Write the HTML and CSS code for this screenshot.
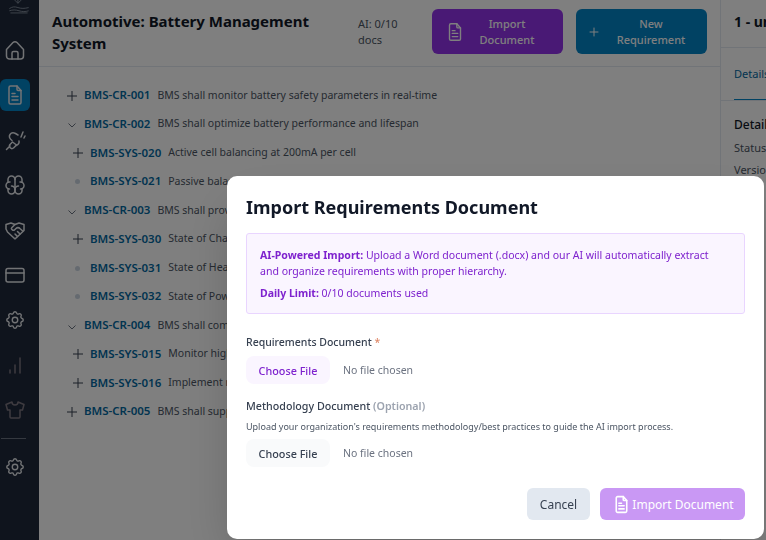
FILE: index.html
```html
<!DOCTYPE html>
<html lang="en">
<head>
<meta charset="utf-8">
<title>Automotive: Battery Management System</title>
<link rel="stylesheet" href="styles.css">
</head>
<body>
<div class="app">
  <aside class="sidebar">
    <svg class="logo" viewBox="0 0 20 14" fill="none" stroke="#8a94a3" stroke-width=".8"><path d="M9 0v4M6 1l3 3 3-3M1 9c3-2 5-2 8-1s6 1 10 0M1 11c3-1 6-1 9 0s6 1 9 0M2 13h16"/></svg>
    <nav class="nav">
      <a class="nav-item"><svg class="ico" viewBox="0 0 24 24"><path d="M3.500 11.500 10 4.600a2.800 2.800 0 0 1 4 0l6.500 6.900V18a3 3 0 0 1-3 3h-11a3 3 0 0 1-3-3z"/><path d="M9 21v-6a1.500 1.500 0 0 1 1.500-1.500h3A1.500 1.500 0 0 1 15 15v6"/></svg></a>
      <a class="nav-item active"><svg class="ico" viewBox="0 0 24 24"><path d="M7.500 3H14l4 4.500v12a1.500 1.500 0 0 1-1.500 1.500h-9A1.500 1.500 0 0 1 6 19.500v-15A1.500 1.500 0 0 1 7.500 3z"/><path d="M14 3v3.500a1 1 0 0 0 1 1h3"/><path d="M9 10.500h3M9 13.500h6M9 17h6"/></svg></a>
      <a class="nav-item"><svg class="ico" viewBox="0 0 24 24"><path d="M3.500 21.500 7 18M9.500 14 7 16.500a2.500 2.500 0 0 0 3.500 3.500l3-3z"/><path d="M9 12.500C6.500 10.500 6 8 7 6.500c1.200-1.700 3.500-2 5.500-1l2.500 1.500"/><path d="M13 17.500c2.500-1 3.500-2.500 3-4.500M18 9l2-5M21 10l1-2"/></svg></a>
      <a class="nav-item"><svg class="ico" viewBox="0 0 24 24"><path d="M15.500 13a3.500 3.500 0 0 0-3.500 3.500v1a3.500 3.500 0 0 0 7 0v-1.800"/><path d="M8.500 13a3.500 3.500 0 0 1 3.500 3.500v1a3.500 3.500 0 0 1-7 0v-1.800"/><path d="M17.500 16a3.500 3.500 0 0 0 0-7H17"/><path d="M19 9.300V6.500a3.500 3.500 0 0 0-7 0"/><path d="M6.500 16a3.500 3.500 0 0 1 0-7H7"/><path d="M5 9.300V6.500a3.500 3.500 0 0 1 7 0v10"/></svg></a>
      <a class="nav-item"><svg class="ico" viewBox="0 0 24 24"><path d="M3 6.500 8 5l4 1.500L16 5l5 1.500v6L12.500 20.500a1 1 0 0 1-1 0L4.500 14 3 11z"/><path d="M12 6.500 8.700 9.800a1 1 0 0 0 0 1.400l.5.500c.7.700 1.800.700 2.500 0l1-1a3.200 3.200 0 0 1 4.500 0l2.500 2.300"/><path d="m12 16 2.500 2.500M14.500 13.500l2.500 2.500"/></svg></a>
      <a class="nav-item"><svg class="ico" viewBox="0 0 24 24"><rect x="3" y="5.500" width="18" height="13.500" rx="2"/><path d="M3 10h18"/></svg></a>
      <a class="nav-item"><svg class="ico cog" viewBox="0 0 24 24"><path d="M10.325 4.317c.426-1.756 2.924-1.756 3.350 0a1.724 1.724 0 0 0 2.573 1.066c1.543-.94 3.310.826 2.370 2.370a1.724 1.724 0 0 0 1.065 2.572c1.756.426 1.756 2.924 0 3.350a1.724 1.724 0 0 0-1.066 2.573c.94 1.543-.826 3.310-2.370 2.370a1.724 1.724 0 0 0-2.572 1.065c-.426 1.756-2.924 1.756-3.350 0a1.724 1.724 0 0 0-2.573-1.066c-1.543.94-3.310-.826-2.370-2.370a1.724 1.724 0 0 0-1.065-2.572c-1.756-.426-1.756-2.924 0-3.350a1.724 1.724 0 0 0 1.066-2.573c-.94-1.543.826-3.310 2.370-2.370 1 .608 2.296.07 2.572-1.065z"/><circle cx="12" cy="12" r="3"/></svg></a>
      <a class="nav-item dim"><svg class="ico" viewBox="0 0 24 24"><path d="M7 20v-3M12 20v-8M17 20V5"/></svg></a>
      <a class="nav-item dim"><svg class="ico" viewBox="0 0 24 24"><path d="M15 4l6 2.500-1.500 5.500H17v7a1 1 0 0 1-1 1H8a1 1 0 0 1-1-1v-7H4.500L3 6.500 9 4a3 3 0 0 0 6 0z"/></svg></a>
      <hr class="nav-rule">
      <a class="nav-item"><svg class="ico cog" viewBox="0 0 24 24"><path d="M10.325 4.317c.426-1.756 2.924-1.756 3.350 0a1.724 1.724 0 0 0 2.573 1.066c1.543-.94 3.310.826 2.370 2.370a1.724 1.724 0 0 0 1.065 2.572c1.756.426 1.756 2.924 0 3.350a1.724 1.724 0 0 0-1.066 2.573c.94 1.543-.826 3.310-2.370 2.370a1.724 1.724 0 0 0-2.572 1.065c-.426 1.756-2.924 1.756-3.350 0a1.724 1.724 0 0 0-2.573-1.066c-1.543.94-3.310-.826-2.370-2.370a1.724 1.724 0 0 0-1.065-2.572c-1.756-.426-1.756-2.924 0-3.350a1.724 1.724 0 0 0 1.066-2.573c-.94-1.543.826-3.310 2.370-2.370 1 .608 2.296.07 2.572-1.065z"/><circle cx="12" cy="12" r="3"/></svg></a>
    </nav>
  </aside>

  <main class="main">
    <header class="header">
      <h1 class="title">Automotive: Battery Management System</h1>
      <div class="usage">AI: 0/10 docs</div>
      <button class="action purple">
        <svg class="action-ico" viewBox="0 0 24 24"><path d="M7.500 3H14l4 4.500v12a1.500 1.500 0 0 1-1.500 1.500h-9A1.500 1.500 0 0 1 6 19.500v-15A1.500 1.500 0 0 1 7.500 3z"/><path d="M14 3v3.500a1 1 0 0 0 1 1h3"/><path d="M9 10.500h3M9 13.500h6M9 17h6"/></svg>
        <span class="action-text">Import Document</span>
      </button>
      <button class="action blue">
        <svg class="action-ico" viewBox="0 0 24 24"><path d="M12 6v12M6 12h12"/></svg>
        <span class="action-text">New Requirement</span>
      </button>
    </header>
    <ul class="tree">
      <li class="row"><span class="tog"><svg class="plus" viewBox="0 0 10 10"><path d="M5 0v10M0 5h10"/></svg></span><b class="rid">BMS-CR-001</b><span class="desc">BMS shall monitor battery safety parameters in real-time</span></li>
      <li class="row"><span class="tog"><svg class="chev" viewBox="0 0 10 10"><path d="m1.500 3.500 3.500 3.500 3.500-3.500"/></svg></span><b class="rid">BMS-CR-002</b><span class="desc">BMS shall optimize battery performance and lifespan</span></li>
      <li class="row child"><span class="tog"><svg class="plus" viewBox="0 0 10 10"><path d="M5 0v10M0 5h10"/></svg></span><b class="rid">BMS-SYS-020</b><span class="desc">Active cell balancing at 200mA per cell</span></li>
      <li class="row child"><span class="tog"><i class="dot"></i></span><b class="rid">BMS-SYS-021</b><span class="desc">Passive balancing during charge</span></li>
      <li class="row"><span class="tog"><svg class="chev" viewBox="0 0 10 10"><path d="m1.500 3.500 3.500 3.500 3.500-3.500"/></svg></span><b class="rid">BMS-CR-003</b><span class="desc">BMS shall provide state estimation</span></li>
      <li class="row child"><span class="tog"><svg class="plus" viewBox="0 0 10 10"><path d="M5 0v10M0 5h10"/></svg></span><b class="rid">BMS-SYS-030</b><span class="desc">State of Charge estimation</span></li>
      <li class="row child"><span class="tog"><i class="dot"></i></span><b class="rid">BMS-SYS-031</b><span class="desc">State of Health estimation</span></li>
      <li class="row child"><span class="tog"><i class="dot"></i></span><b class="rid">BMS-SYS-032</b><span class="desc">State of Power estimation</span></li>
      <li class="row"><span class="tog"><svg class="chev" viewBox="0 0 10 10"><path d="m1.500 3.500 3.500 3.500 3.500-3.500"/></svg></span><b class="rid">BMS-CR-004</b><span class="desc">BMS shall comply with safety standards</span></li>
      <li class="row child"><span class="tog"><svg class="plus" viewBox="0 0 10 10"><path d="M5 0v10M0 5h10"/></svg></span><b class="rid">BMS-SYS-015</b><span class="desc">Monitor high voltage isolation</span></li>
      <li class="row child"><span class="tog"><svg class="plus" viewBox="0 0 10 10"><path d="M5 0v10M0 5h10"/></svg></span><b class="rid">BMS-SYS-016</b><span class="desc">Implement redundant monitoring</span></li>
      <li class="row"><span class="tog"><svg class="plus" viewBox="0 0 10 10"><path d="M5 0v10M0 5h10"/></svg></span><b class="rid">BMS-CR-005</b><span class="desc">BMS shall support diagnostics</span></li>
    </ul>
  </main>

  <aside class="panel">
    <div class="panel-head">1 - untitled</div>
    <div class="tabs"><span class="tab">Details</span></div>
    <div class="panel-body">
      <h3 class="panel-title">Details</h3>
      <p class="panel-line">Status: Draft</p>
      <p class="panel-line">Version: 1</p>
    </div>
  </aside>
</div>

<div class="overlay">
  <section class="modal">
    <h2 class="modal-title">Import Requirements Document</h2>
    <div class="info">
      <p class="info-text"><strong>AI-Powered Import:</strong> Upload a Word document (.docx) and our AI will automatically extract and organize requirements with proper hierarchy.</p>
      <p class="info-limit"><strong>Daily Limit:</strong> 0/10 documents used</p>
    </div>
    <label class="label">Requirements Document <span class="req">*</span></label>
    <div class="file"><span class="file-btn primary">Choose File</span><span class="file-none">No file chosen</span></div>
    <label class="label second">Methodology Document <span class="opt">(Optional)</span></label>
    <p class="help">Upload your organization's requirements methodology/best practices to guide the AI import process.</p>
    <div class="file"><span class="file-btn">Choose File</span><span class="file-none">No file chosen</span></div>
    <div class="footer">
      <button class="cancel">Cancel</button>
      <button class="submit"><svg class="submit-ico" viewBox="0 0 24 24"><path d="M7.500 3H14l4 4.500v12a1.500 1.500 0 0 1-1.500 1.500h-9A1.500 1.500 0 0 1 6 19.500v-15A1.500 1.500 0 0 1 7.500 3z"/><path d="M14 3v3.500a1 1 0 0 0 1 1h3"/><path d="M9 10.500h3M9 13.500h6M9 17h6"/></svg>Import Document</button>
    </div>
  </section>
</div>
</body>
</html>
```
FILE: styles.css
```css
* { box-sizing: border-box; }
html, body { margin: 0; height: 100%; overflow: hidden; }
body { font-family: "Noto Sans", sans-serif; color: #111827; background: #fff; }
button { font-family: inherit; border: 0; cursor: pointer; }
p, h1, h2, h3, ul { margin: 0; padding: 0; }

.app { display: flex; height: 540px; width: 766px; overflow: hidden; }

.sidebar { width: 39px; flex: none; background: #1e293b; position: relative; padding-top: 34px; overflow: hidden; }
.logo { position: absolute; left: 8px; top: -1px; width: 22px; height: 15px; }
.nav { display: flex; flex-direction: column; gap: 13px; width: 30px; }
.nav-item { display: flex; align-items: center; justify-content: center; height: 32px; width: 30px; color: #e5e7eb; border-radius: 6px; }
.nav-item.active { background: #0284c7; }
.nav-item.dim { color: #7d7680; }
.ico { width: 24px; height: 24px; flex: none; fill: none; stroke: currentColor; stroke-width: 1.500; stroke-linecap: round; stroke-linejoin: round; }
.ico.cog { width: 22px; height: 22px; }
.nav-rule { width: 25px; margin: -1px 0 -1px 1px; border: 0; border-top: 1px solid #6b7280; }

.main { flex: 1; min-width: 0; display: flex; flex-direction: column; background: #fff; }
.header { height: 67px; flex: none; display: flex; align-items: center; padding: 0 13px 3px; border-bottom: 1px solid #e2e8f0; }
.title { font-size: 15px; line-height: 22px; font-weight: 700; width: 306px; flex: none; color: #111827; }
.usage { width: 74px; padding-right: 24px; flex: none; font-size: 11px; line-height: 16px; color: #4b5563; }
.action { width: 131px; height: 45px; flex: none; display: flex; align-items: center; border-radius: 6px; padding: 0 21px 0 10px; color: #fff; font-size: 11px; line-height: 16px; font-weight: 500; margin-right: 13px; }
.action:last-child { margin-right: 0; }
.purple { background: #9333ea; padding-left: 12px; }
.blue { background: #0284c7; }
.action-ico { width: 16px; height: 16px; flex: none; fill: none; stroke: currentColor; stroke-width: 1.500; stroke-linecap: round; stroke-linejoin: round; }
.purple .action-ico { width: 22px; height: 22px; }
.action-text { width: 70px; margin-left: auto; text-align: center; }

.tree { list-style: none; padding: 13.200px 0 0 26px; }
.row { display: flex; align-items: center; height: 28.750px; font-size: 10.500px; white-space: nowrap; }
.row.child { padding-left: 6px; }
.tog { width: 19px; flex: none; display: flex; justify-content: center; align-items: center; height: 12px; padding-right: 6px; position: relative; top: 1px; }
.plus { width: 10px; height: 10px; fill: none; stroke: #374151; stroke-width: 1; }
.chev { width: 10px; height: 10px; fill: none; stroke: #6b7280; stroke-width: 1; position: relative; top: 1px; }
.dot { width: 5px; height: 5px; border-radius: 50%; background: #cbd5e1; }
.rid { color: #0369a1; font-weight: 600; margin-right: 7px; font-size: 11.500px; }
.desc { color: #4b5563; }

.panel { width: 46px; flex: none; border-left: 1px solid #e2e8f0; background: #fff; overflow: hidden; white-space: nowrap; }
.panel-head { height: 48px; padding: 13px 0 0 13px; border-bottom: 1px solid #e2e8f0; font-size: 14px; line-height: 18px; font-weight: 700; }
.tabs { height: 53px; padding: 18px 0 0 13px; border-bottom: 1px solid #e2e8f0; position: relative; }
.tab { display: block; height: 34px; font-size: 11px; line-height: 16px; color: #0369a1; border-bottom: 1px solid #0284c7; }
.panel-body { padding: 15px 0 0 13px; }
.panel-title { font-size: 12px; line-height: 18px; font-weight: 500; }
.panel-line { font-size: 11px; line-height: 16px; color: #4b5563; margin-top: 6px; }

.overlay { position: fixed; inset: 0; background: rgba(0, 0, 0, .5); }
.modal { position: absolute; left: 227px; top: 176px; width: 537px; height: 363px; background: #fff; border-radius: 10px; padding: 19px; box-shadow: 0 25px 50px -12px rgba(0, 0, 0, .25); }
.modal-title { font-size: 18px; line-height: 25px; font-weight: 700; color: #111827; }
.info { margin-top: 13px; height: 81px; padding: 13px; background: #faf5ff; border: 1px solid #e9d5ff; border-radius: 3px; color: #7e22ce; font-size: 10.500px; line-height: 16px; }
.info-text { font-size: 10.550px; padding-right: 10px; }
.info-limit { margin-top: 6px; }
.info strong { font-weight: 700; }
.label { display: block; margin-top: 20px; font-size: 10.500px; line-height: 16px; font-weight: 500; color: #374151; }
.label.second { margin-top: 14px; font-size: 10.700px; }
.req { color: #e08a6a; }
.opt { color: #9ca3af; font-weight: 600; }
.file { display: flex; align-items: center; margin-top: 6px; }
.file-btn { width: 84px; height: 28px; display: flex; align-items: center; justify-content: center; border-radius: 8px; background: #f9fafb; color: #374151; font-size: 10.800px; font-weight: 500; }
.file-btn.primary { background: #faf5ff; color: #7e22ce; }
.file-none { margin-left: 13px; font-size: 10.500px; color: #6b7280; }
.help { margin-top: 6px; font-size: 9px; line-height: 13px; color: #4b5563; }
.footer { display: flex; justify-content: flex-end; gap: 10px; margin-top: 21px; }
.cancel { width: 63px; height: 32px; border-radius: 6px; background: #e2e8f0; color: #374151; font-size: 12px; }
.submit { width: 145px; height: 32px; border-radius: 6px; background: #9333ea; opacity: .5; color: #fff; font-size: 12px; display: flex; align-items: center; justify-content: center; gap: 0; }
.submit-ico { width: 21px; height: 21px; fill: none; stroke: currentColor; stroke-width: 1.800; stroke-linecap: round; stroke-linejoin: round; }
```
